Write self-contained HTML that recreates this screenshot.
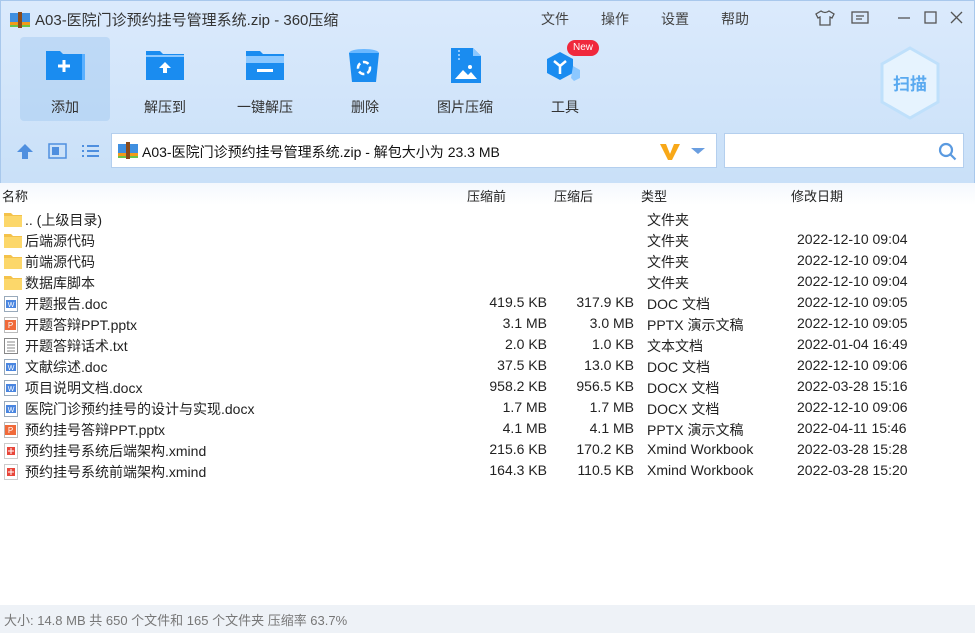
<!DOCTYPE html><html><head><meta charset="utf-8"><style>
*{margin:0;padding:0;box-sizing:border-box}
body{width:975px;height:633px;overflow:hidden;font-family:"Liberation Sans","Noto Sans CJK SC",sans-serif;font-size:14px;color:#222;background:#fff;position:relative}
.top{position:absolute;left:0;top:0;width:975px;height:183px;background:linear-gradient(#dbeafc,#c9e0f8);border:1px solid #a8c8ec;border-bottom:none}
.abs{position:absolute}
.menu span{position:absolute;top:9px;font-size:14px;color:#444}
.tb{position:absolute;top:38px;width:90px;height:84px;text-align:center}
.tb .l{position:absolute;top:59px;left:0;width:100%;font-size:14px;color:#333}
.tb svg{position:absolute;left:26px;top:10px}
.addr{position:absolute;left:111px;top:133px;width:606px;height:35px;background:#fff;border:1px solid #b4cfee}
.srch{position:absolute;left:724px;top:133px;width:240px;height:35px;background:#fff;border:1px solid #b4cfee}
.hdr{position:absolute;left:0;top:183px;width:975px;height:22px;background:linear-gradient(#f4f8fd,#fff)}
.hdr span{position:absolute;top:3px;font-size:13px;color:#222}
.row{position:absolute;left:0;width:975px;height:21px;font-size:14px}
.row span{position:absolute;top:1px;white-space:nowrap}
.r1{right:428px}.r2{right:341px}
.ic{position:absolute;left:4px;top:3px}
.status{position:absolute;left:0;top:605px;width:975px;height:28px;background:#eef2f7;font-size:13px;color:#777;padding:5px 4px}
</style></head><body>
<div class="top"></div>
<svg class="abs" style="left:10px;top:12px" width="20" height="16"><rect x="0" y="1" width="20" height="14" fill="#3f8fe0"/><rect x="0" y="10" width="20" height="5" fill="#f19a1a"/><rect x="0" y="13" width="20" height="2" fill="#6cc24a"/><rect x="8" y="0" width="4" height="16" fill="#8a4a1a"/></svg>
<div class="abs" style="left:35px;top:9px;font-size:15px;color:#333">A03-医院门诊预约挂号管理系统.zip - 360压缩</div>
<div class="menu"><span style="left:541px">文件</span><span style="left:601px">操作</span><span style="left:661px">设置</span><span style="left:721px">帮助</span></div>
<svg class="abs" style="left:815px;top:10px" width="20" height="16" fill="none" stroke="#555" stroke-width="1.3"><path d="M6 1 L1 4 L3 8 L5 7 L5 15 L15 15 L15 7 L17 8 L19 4 L14 1 Q10 4 6 1Z"/></svg>
<svg class="abs" style="left:851px;top:11px" width="18" height="15" fill="none" stroke="#555" stroke-width="1.3"><rect x="1" y="1" width="16" height="11"/><path d="M5 5h8M5 8h6"/></svg>
<svg class="abs" style="left:897px;top:10px" width="70" height="16" stroke="#555" stroke-width="1.3" fill="none"><path d="M1 8h12"/><rect x="28" y="2" width="11" height="11"/><path d="M54 2l11 11M65 2L54 13"/></svg>
<div class="abs" style="left:20px;top:37px;width:90px;height:84px;background:rgba(160,200,240,.45);border-radius:4px"></div>
<div class="tb" style="left:20px"><svg width="40" height="34"><path d="M0 3h14l3 3h21v26H0z" fill="#1a8cf0"/><rect x="36" y="6" width="3" height="26" fill="#5ab0ff"/><path d="M18 12v12M12 18h12" stroke="#fff" stroke-width="3"/></svg><div class="l">添加</div></div>
<div class="tb" style="left:120px"><svg width="40" height="34"><path d="M0 3h14l3 3h21v26H0z" fill="#1a8cf0"/><rect x="0" y="7" width="38" height="2" fill="#8cc8ff"/><path d="M19 14l-6 6h4v5h4v-5h4z" fill="#fff"/></svg><div class="l">解压到</div></div>
<div class="tb" style="left:220px"><svg width="40" height="34"><path d="M0 3h14l3 3h21v26H0z" fill="#1a8cf0"/><rect x="0" y="8" width="38" height="7" fill="#8cc8ff"/><rect x="11" y="21" width="16" height="3" fill="#fff"/></svg><div class="l">一键解压</div></div>
<div class="tb" style="left:320px"><svg width="40" height="38" style="top:10px"><ellipse cx="18" cy="5" rx="15" ry="4" fill="#6ab8ff"/><path d="M3 5h30l-3 29H6z" fill="#1a8cf0"/><circle cx="18" cy="20" r="6" fill="none" stroke="#fff" stroke-width="2.5" stroke-dasharray="6 3"/></svg><div class="l">删除</div></div>
<div class="tb" style="left:420px"><svg width="40" height="38" style="top:9px"><path d="M5 1h22l8 8v27H5z" fill="#1a8cf0"/><path d="M27 1v8h8z" fill="#8cc8ff"/><path d="M9 32l8-9 5 5 3-3 6 7z" fill="#fff"/><circle cx="24" cy="20" r="2" fill="#fff"/><path d="M13 3v2M13 7v2M13 11v2" stroke="#8cc8ff" stroke-width="2"/></svg><div class="l">图片压缩</div></div>
<div class="tb" style="left:520px"><svg width="44" height="40" style="left:26px;top:12px"><path d="M14 2l13 7v14l-13 7-13-7V9z" fill="#1a8cf0"/><path d="M27 16l7 4v8l-6 3-3-3z" fill="#8cc8ff"/><path d="M8 11l6 5 6-5M14 16v8" stroke="#fff" stroke-width="2.5" fill="none"/></svg><div class="l">工具</div></div>
<div class="abs" style="left:567px;top:40px;width:32px;height:16px;background:#f0283c;border-radius:8px;color:#fff;font-size:10px;text-align:center;line-height:16px">New</div>
<svg class="abs" style="left:879px;top:46px" width="62" height="76"><path d="M31 2l28 16v38L31 72 3 56V18z" fill="#e6f3fe" stroke="#bfe0fb" stroke-width="3"/><text x="31" y="44" text-anchor="middle" font-size="17" font-weight="bold" fill="#5aaaf0" font-family="Noto Sans CJK SC">扫描</text></svg>
<svg class="abs" style="left:16px;top:143px" width="90" height="16"><path d="M9 1l8 8h-5v7H6V9H1z" fill="#4f8fdf"/><rect x="33" y="1" width="17" height="14" fill="none" stroke="#4f8fdf" stroke-width="1.5"/><rect x="36" y="4" width="7" height="8" fill="#4f8fdf"/><path d="M66 3h2M71 3h12M66 8h2M71 8h12M66 13h2M71 13h12" stroke="#4f8fdf" stroke-width="2"/></svg>
<div class="addr"><svg class="abs" style="left:6px;top:8px" width="20" height="17"><rect x="0" y="2" width="20" height="14" fill="#3f8fe0"/><rect x="0" y="11" width="20" height="5" fill="#f19a1a"/><rect x="0" y="14" width="20" height="2" fill="#6cc24a"/><rect x="8" y="0" width="4" height="17" fill="#8a4a1a"/></svg><div class="abs" style="left:30px;top:8px;font-size:14px;color:#111">A03-医院门诊预约挂号管理系统.zip - 解包大小为 23.3 MB</div>
<svg class="abs" style="left:547px;top:9px" width="60" height="18"><path d="M1 1h6l4 10 4-10h6l-8 16h-4z" fill="#f8a818"/><path d="M32 5h14l-7 6z" fill="#6a9ee0"/></svg></div>
<div class="srch"><svg class="abs" style="left:213px;top:8px" width="20" height="19" fill="none" stroke="#5a9ae0" stroke-width="2.2"><circle cx="8" cy="8" r="6"/><path d="M12.5 12.5l5 5"/></svg></div>
<div class="hdr"><span style="left:2px">名称</span><span style="left:467px">压缩前</span><span style="left:554px">压缩后</span><span style="left:641px">类型</span><span style="left:791px">修改日期</span></div>
<div id="rows"></div>
<div class="status">大小: 14.8 MB 共 650 个文件和 165 个文件夹 压缩率 63.7%</div>
<script>
var F='<svg class="ic" width="18" height="15"><path d="M0 1h7l2 2h9v12H0z" fill="#f4c24a"/><rect x="0" y="4" width="18" height="11" fill="#fcd76a"/></svg>';
var W='<svg class="ic" width="15" height="16"><rect x=".5" y=".5" width="13" height="15" fill="#fff" stroke="#9ab"/><rect x="2" y="4" width="10" height="8" fill="#4a86e0"/><text x="7" y="11" font-size="7" fill="#fff" text-anchor="middle">W</text></svg>';
var P='<svg class="ic" width="15" height="16"><rect x=".5" y=".5" width="13" height="15" fill="#fff" stroke="#bbb"/><rect x="1" y="3" width="11" height="10" fill="#f06a3a"/><text x="6.5" y="11" font-size="8" fill="#fff" text-anchor="middle">P</text></svg>';
var T='<svg class="ic" width="15" height="16"><rect x=".5" y=".5" width="13" height="15" fill="#fff" stroke="#888"/><path d="M3 4h8M3 7h8M3 10h8M3 13h8" stroke="#888"/></svg>';
var X='<svg class="ic" width="15" height="16"><rect x=".5" y=".5" width="13" height="15" fill="#fff" stroke="#ccc"/><rect x="3" y="4" width="8" height="8" fill="#e8463a"/><path d="M7 5v6M4 8h6" stroke="#fff"/></svg>';
var d=[[F,'.. (上级目录)','','','文件夹',''],[F,'后端源代码','','','文件夹','2022-12-10 09:04'],[F,'前端源代码','','','文件夹','2022-12-10 09:04'],[F,'数据库脚本','','','文件夹','2022-12-10 09:04'],
[W,'开题报告.doc','419.5 KB','317.9 KB','DOC 文档','2022-12-10 09:05'],[P,'开题答辩PPT.pptx','3.1 MB','3.0 MB','PPTX 演示文稿','2022-12-10 09:05'],[T,'开题答辩话术.txt','2.0 KB','1.0 KB','文本文档','2022-01-04 16:49'],[W,'文献综述.doc','37.5 KB','13.0 KB','DOC 文档','2022-12-10 09:06'],[W,'项目说明文档.docx','958.2 KB','956.5 KB','DOCX 文档','2022-03-28 15:16'],[W,'医院门诊预约挂号的设计与实现.docx','1.7 MB','1.7 MB','DOCX 文档','2022-12-10 09:06'],[P,'预约挂号答辩PPT.pptx','4.1 MB','4.1 MB','PPTX 演示文稿','2022-04-11 15:46'],[X,'预约挂号系统后端架构.xmind','215.6 KB','170.2 KB','Xmind Workbook','2022-03-28 15:28'],[X,'预约挂号系统前端架构.xmind','164.3 KB','110.5 KB','Xmind Workbook','2022-03-28 15:20']];
var h='';d.forEach(function(r,i){h+='<div class="row" style="top:'+(209+i*21)+'px">'+r[0]+'<span style="left:25px">'+r[1]+'</span><span class="r1">'+r[2]+'</span><span class="r2">'+r[3]+'</span><span style="left:647px">'+r[4]+'</span><span style="left:797px">'+r[5]+'</span></div>'});
document.getElementById('rows').innerHTML=h;
</script>
</body></html>
